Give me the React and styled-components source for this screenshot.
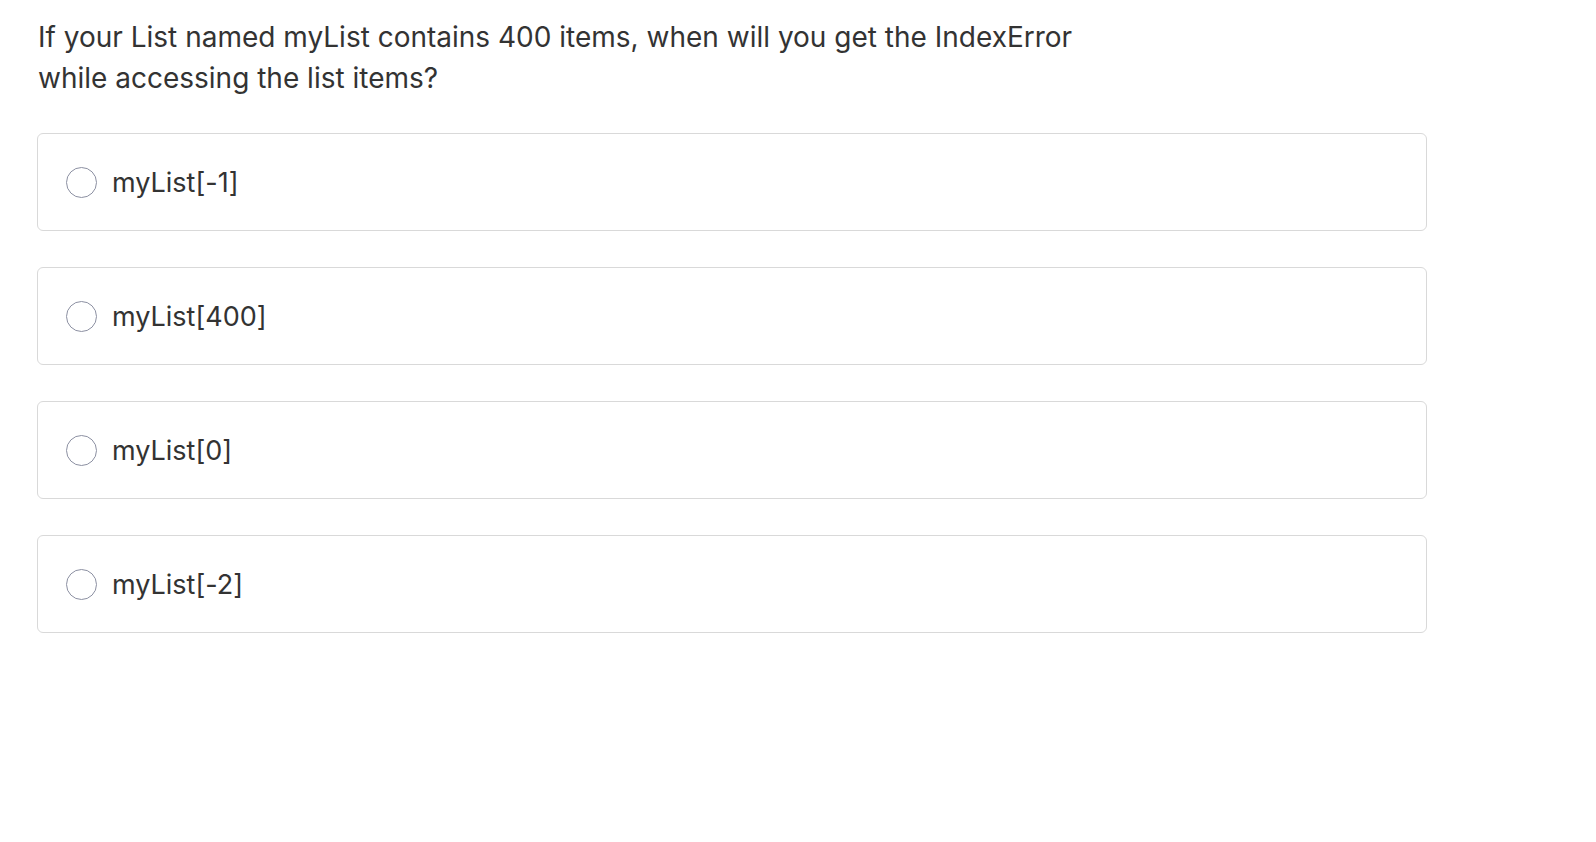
import React, { useState } from 'react';
import styled, { createGlobalStyle } from 'styled-components';

const GlobalStyle = createGlobalStyle`
  body {
    margin: 0;
    background: #ffffff;
    font-family: Inter, "Liberation Sans", Arial, sans-serif;
    color: #333333;
  }
`;

const Page = styled.div`
  padding: 17px 38px 40px 37px;
  width: 1390px;
`;

const Question = styled.p`
  margin: 0 0 34px 1px;
  font-size: 28px;
  line-height: 41px;
  max-width: 1050px;
  color: #333333;
`;

const Options = styled.div`
  display: flex;
  flex-direction: column;
  gap: 36px;
`;

const Option = styled.label`
  display: flex;
  align-items: center;
  gap: 15px;
  height: 98px;
  box-sizing: border-box;
  padding: 0 28px;
  border: 1px solid ${(p) => (p.$checked ? '#8a9bd0' : '#d9d9d9')};
  border-radius: 6px;
  cursor: pointer;
`;

const Radio = styled.span`
  width: 31px;
  height: 31px;
  box-sizing: border-box;
  border-radius: 50%;
  border: 1px solid #8c90a2;
  display: flex;
  align-items: center;
  justify-content: center;
  flex-shrink: 0;

  &::after {
    content: '';
    width: 14px;
    height: 14px;
    border-radius: 50%;
    background: #4a6fd1;
    display: ${(p) => (p.$checked ? 'block' : 'none')};
  }
`;

const OptionText = styled.span`
  font-size: 27px;
  color: #333333;
`;

const choices = ['myList[-1]', 'myList[400]', 'myList[0]', 'myList[-2]'];

function App() {
  const [selected, setSelected] = useState(null);

  return (
    <Page>
      <GlobalStyle />
      <Question>
        If your List named myList contains 400 items, when will you get the IndexError
        while accessing the list items?
      </Question>
      <Options>
        {choices.map((c, i) => (
          <Option key={c} $checked={selected === i} onClick={() => setSelected(i)}>
            <Radio $checked={selected === i} />
            <OptionText>{c}</OptionText>
          </Option>
        ))}
      </Options>
    </Page>
  );
}

export default App;
